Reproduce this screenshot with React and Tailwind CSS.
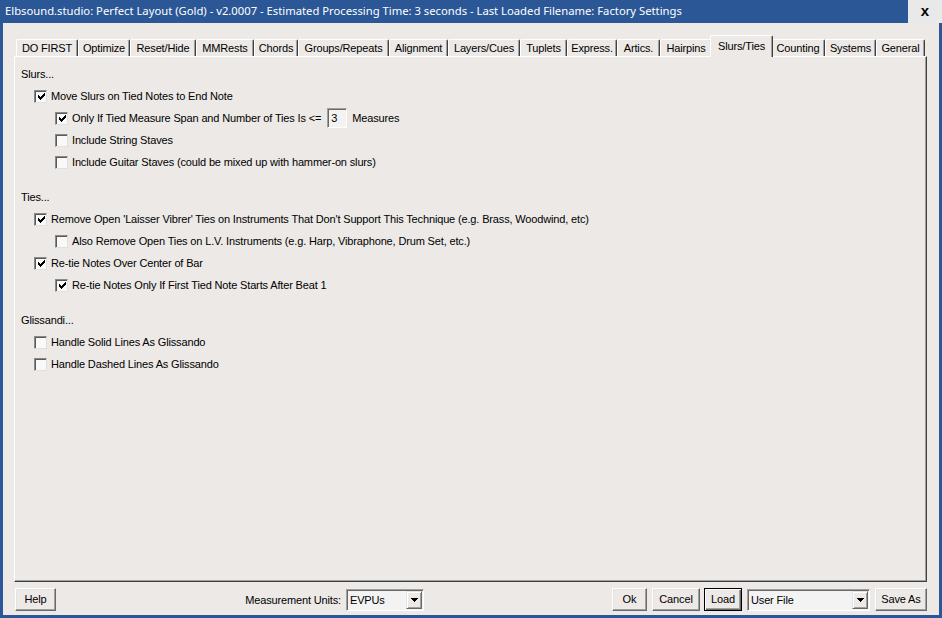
import React from "react";

const TABS = [
  { label: "DO FIRST", w: "w-[62px]" },
  { label: "Optimize", w: "w-[52px]" },
  { label: "Reset/Hide", w: "w-[66px]" },
  { label: "MMRests", w: "w-[58px]" },
  { label: "Chords", w: "w-[44px]" },
  { label: "Groups/Repeats", w: "w-[91px]" },
  { label: "Alignment", w: "w-[59px]" },
  { label: "Layers/Cues", w: "w-[72px]" },
  { label: "Tuplets", w: "w-[47px]" },
  { label: "Express.", w: "w-[50px]" },
  { label: "Artics.", w: "w-[43px]" },
  { label: "Hairpins", w: "w-[52px]" },
  { label: "Slurs/Ties", w: "w-[63px]", selected: true },
  { label: "Counting", w: "w-[54px]" },
  { label: "Systems", w: "w-[51px]" },
  { label: "General", w: "w-[49px]" },
];

const CHECK_PIX = [
  [6, 0],
  [5, 1], [6, 1],
  [0, 2], [4, 2], [5, 2], [6, 2],
  [0, 3], [1, 3], [3, 3], [4, 3], [5, 3],
  [0, 4], [1, 4], [2, 4], [3, 4], [4, 4],
  [1, 5], [2, 5], [3, 5],
  [2, 6],
];

function CheckMark() {
  return (
    <svg width="7" height="7" viewBox="0 0 7 7" shapeRendering="crispEdges">
      {CHECK_PIX.map(([x, y], i) => (
        <rect key={i} x={x} y={y} width="1" height="1" fill="#000" />
      ))}
    </svg>
  );
}

function Checkbox({ checked }) {
  return (
    <div className="w-[13px] h-[13px] shrink-0 border border-t-[#8a8a8a] border-l-[#8a8a8a] border-r-[#e0e0e0] border-b-[#e0e0e0] bg-[#f9f9f9] shadow-[inset_1px_1px_0_#5a5a5a] flex items-center justify-center">
      {checked && (
        <div className="ml-[1px] mt-[1px] flex">
          <CheckMark />
        </div>
      )}
    </div>
  );
}

function Row({ level, checked, children }) {
  return (
    <div
      className={
        "h-[22px] flex items-center gap-[4px] " +
        (level === 2 ? "pl-[34px]" : "pl-[13px]")
      }
    >
      <Checkbox checked={checked} />
      <div className="flex items-center whitespace-nowrap">{children}</div>
    </div>
  );
}

function Heading({ children, className = "" }) {
  return (
    <div className={"h-[22px] flex items-center " + className}>{children}</div>
  );
}

function Button({ children, className = "", isDefault = false }) {
  return (
    <div
      className={
        "h-[23px] flex items-center justify-center bg-[#ece9e6] text-[11px] text-black shrink-0 " +
        (isDefault
          ? "border border-black shadow-[inset_1px_1px_0_#ffffff,inset_-1px_-1px_0_#696969,inset_-2px_-2px_0_#a0a0a0] "
          : "border border-t-white border-l-white border-r-[#696969] border-b-[#696969] shadow-[inset_-1px_-1px_0_#a0a0a0,inset_1px_1px_0_#e3e3e3] ") +
        className
      }
    >
      {children}
    </div>
  );
}

function Select({ value, className = "" }) {
  return (
    <div
      className={
        "h-[22px] flex items-center bg-[#f3f3f3] border border-t-[#a0a0a0] border-l-[#a0a0a0] border-r-white border-b-white shadow-[inset_1px_1px_0_#696969] pl-[3px] pr-[1px] shrink-0 " +
        className
      }
    >
      <div className="flex-1 text-[11px] text-black pt-[1px]">{value}</div>
      <div className="w-[16px] h-[18px] flex items-center justify-center bg-[#ece9e6] border border-t-[#e3e3e3] border-l-[#e3e3e3] border-r-[#696969] border-b-[#696969] shadow-[inset_1px_1px_0_#ffffff,inset_-1px_-1px_0_#a0a0a0]">
        <svg width="7" height="4" viewBox="0 0 7 4" shapeRendering="crispEdges">
          <path d="M0 0H7V1H6V2H5V3H4V4H3V3H2V2H1V1H0Z" fill="#000" />
        </svg>
      </div>
    </div>
  );
}

export default function App() {
  return (
    <div className="w-[942px] h-[618px] bg-[#2b5797] flex flex-col overflow-hidden font-['Liberation_Sans',Arial,sans-serif]">
      {/* Title bar */}
      <div className="h-[23px] shrink-0 flex items-start">
        <div className="flex-1 h-[23px] flex items-center pl-[5px] text-white text-[11.25px] font-['Noto_Sans',sans-serif] whitespace-nowrap">
          Elbsound.studio: Perfect Layout (Gold) - v2.0007 - Estimated Processing Time: 3 seconds - Last Loaded Filename: Factory Settings
        </div>
        <div className="w-[34px] h-[23px] bg-[#e9e9e9] flex items-center justify-center">
          <span className="text-[15px] font-bold text-black leading-none font-['Liberation_Sans',sans-serif] -mt-[3px]">x</span>
        </div>
      </div>

      {/* Client */}
      <div className="flex-1 mx-[3px] mb-[3px] bg-[#ece9e6] flex flex-col pt-[12px] pl-[11px] pr-[12px] pb-[4px] text-[11px] text-black tracking-[-0.15px]">
        {/* Tabs */}
        <div className="h-[21px] shrink-0 flex items-end pl-[2px]">
          {TABS.map((t) =>
            t.selected ? (
              <div
                key={t.label}
                className={
                  t.w +
                  " h-[22px] -mx-[2px] -mb-[1px] relative z-10 bg-[#ece9e6] border-l border-t border-r border-l-white border-t-white border-r-[#404040] shadow-[inset_-1px_0_0_#a0a0a0] rounded-t-[2px] flex justify-center pt-[2px] whitespace-nowrap"
                }
              >
                {t.label}
              </div>
            ) : (
              <div
                key={t.label}
                className={
                  t.w +
                  " h-[17px] bg-[#ece9e6] border-l border-t border-r border-l-white border-t-white border-r-[#404040] shadow-[inset_-1px_0_0_#a0a0a0] rounded-t-[2px] flex justify-center items-center whitespace-nowrap"
                }
              >
                {t.label}
              </div>
            )
          )}
        </div>

        {/* Panel */}
        <div className="flex-1 border border-t-white border-l-white border-r-[#404040] border-b-[#404040] shadow-[inset_-1px_-1px_0_#a0a0a0] pt-[6px] pl-[6px]">
          <Heading>Slurs...</Heading>
          <Row level={1} checked>
            Move Slurs on Tied Notes to End Note
          </Row>
          <Row level={2} checked>
            <span>Only If Tied Measure Span and Number of Ties Is &lt;=</span>
            <div className="ml-[6px] w-[20px] h-[20px] bg-[#f3f3f3] border border-t-[#a0a0a0] border-l-[#a0a0a0] border-r-white border-b-white shadow-[inset_1px_1px_0_#696969] flex items-center pl-[3px]">
              3
            </div>
            <span className="ml-[5px]">Measures</span>
          </Row>
          <Row level={2}>Include String Staves</Row>
          <Row level={2}>Include Guitar Staves (could be mixed up with hammer-on slurs)</Row>

          <Heading className="mt-[13px]">Ties...</Heading>
          <Row level={1} checked>
            Remove Open 'Laisser Vibrer' Ties on Instruments That Don't Support This Technique (e.g. Brass, Woodwind, etc)
          </Row>
          <Row level={2}>
            Also Remove Open Ties on L.V. Instruments (e.g. Harp, Vibraphone, Drum Set, etc.)
          </Row>
          <Row level={1} checked>
            Re-tie Notes Over Center of Bar
          </Row>
          <Row level={2} checked>
            Re-tie Notes Only If First Tied Note Starts After Beat 1
          </Row>

          <Heading className="mt-[13px]">Glissandi...</Heading>
          <Row level={1}>Handle Solid Lines As Glissando</Row>
          <Row level={1}>Handle Dashed Lines As Glissando</Row>
        </div>

        {/* Bottom bar */}
        <div className="h-[23px] mt-[6px] shrink-0 flex items-start">
          <Button className="w-[41px] ml-[1px]">Help</Button>
          <div className="w-[368px] flex items-center justify-end gap-[5px]">
            <span className="mt-[1px]">Measurement Units:</span>
            <Select value="EVPUs" className="w-[78px] mt-[1px]" />
          </div>
          <Button className="w-[35px] ml-[188px]">Ok</Button>
          <Button className="w-[48px] ml-[5px]">Cancel</Button>
          <Button className="w-[38px] ml-[4px]" isDefault>
            Load
          </Button>
          <Select value="User File" className="w-[123px] ml-[5px] mt-[1px]" />
          <Button className="w-[52px] ml-[5px]">Save As</Button>
        </div>
      </div>
    </div>
  );
}
